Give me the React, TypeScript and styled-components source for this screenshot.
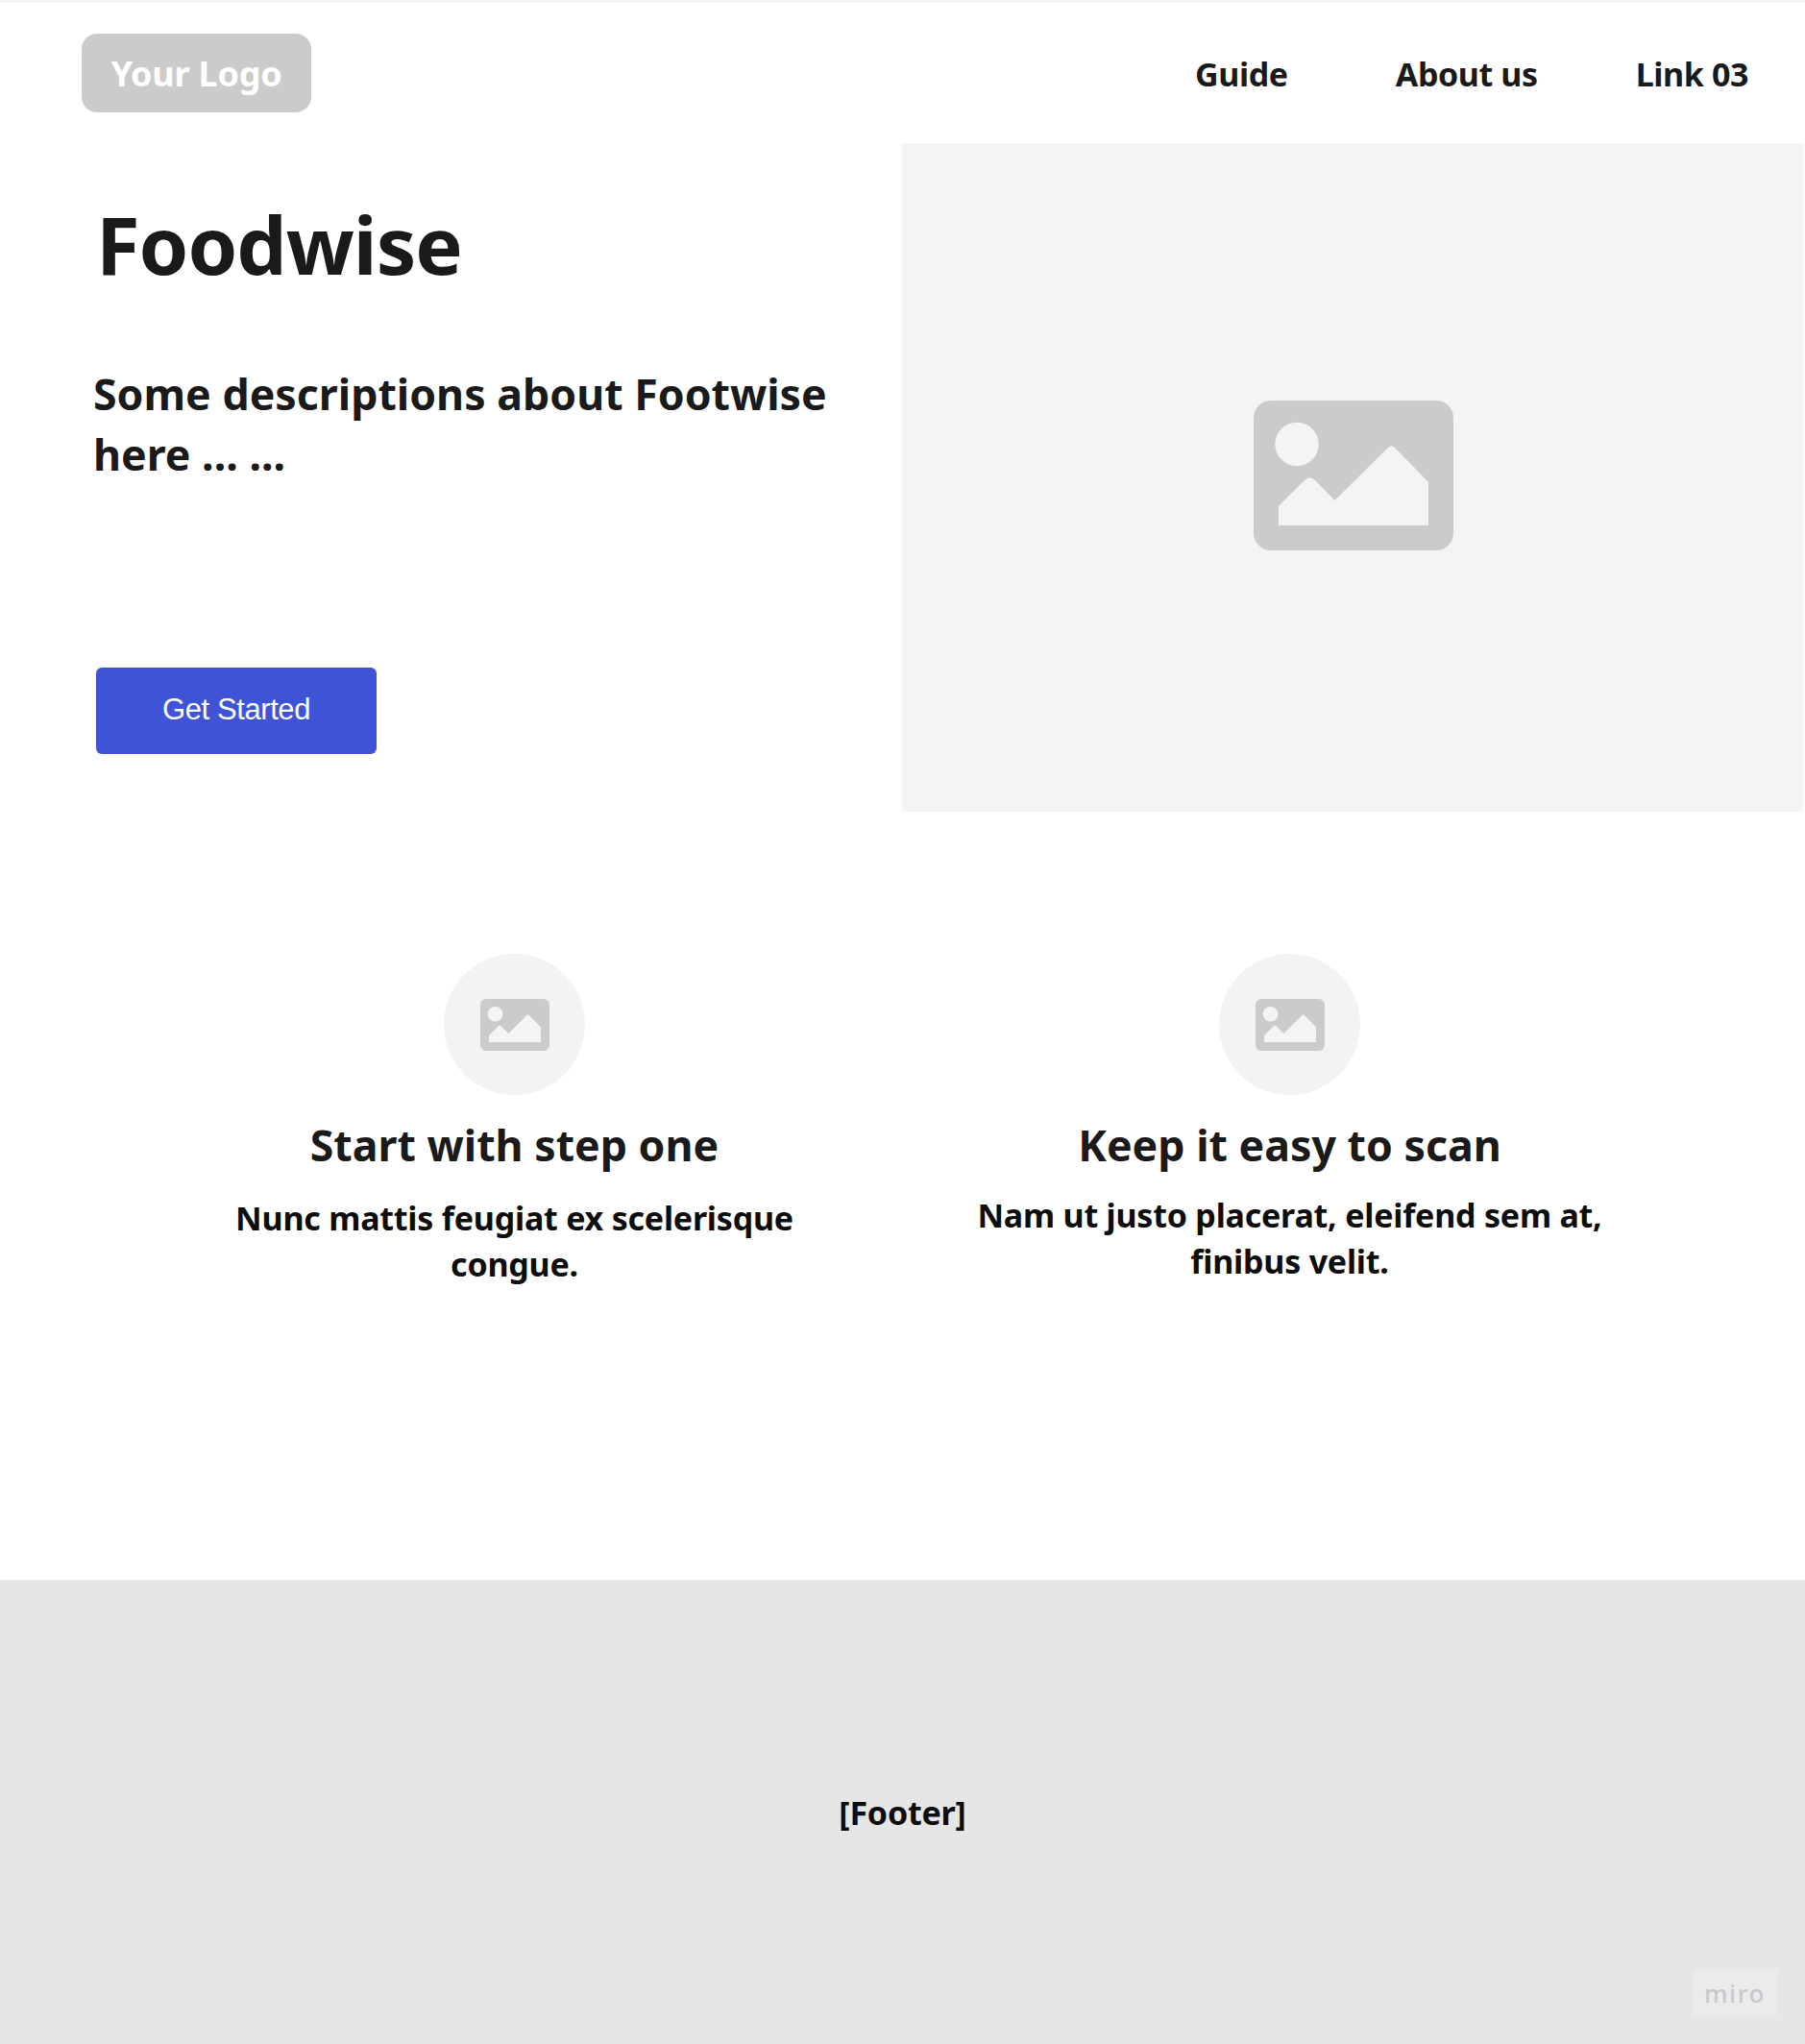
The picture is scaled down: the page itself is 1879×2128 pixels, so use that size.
import { createGlobalStyle } from "styled-components";
import styled from "styled-components";

const GlobalStyle = createGlobalStyle`
  html, body {
    margin: 0;
    padding: 0;
    background: #ffffff;
  }
  * {
    box-sizing: border-box;
  }
`;

const Page = styled.div`
  width: 1879px;
  height: 2128px;
  display: flex;
  flex-direction: column;
  border-top: 3px solid #f3f3f3;
  font-family: "Noto Sans", sans-serif;
  color: #1a1a1a;
`;

const Header = styled.header`
  height: 146px;
  padding: 32px 59px 0 85px;
  display: flex;
  justify-content: space-between;
  align-items: flex-start;
`;

const Logo = styled.div`
  width: 239px;
  height: 82px;
  border-radius: 16px;
  background: #cbcbcb;
  color: #ffffff;
  font-size: 36px;
  font-weight: 700;
  letter-spacing: -0.2px;
  display: flex;
  align-items: center;
  justify-content: center;
`;

const Nav = styled.nav`
  display: flex;
  gap: 102px;
  padding-top: 18px;
`;

const NavLink = styled.a`
  font-size: 34px;
  font-weight: 700;
  line-height: 49px;
  letter-spacing: -0.4px;

  &:first-child {
    margin-right: 10px;
  }
`;

const Hero = styled.section`
  height: 696px;
  display: grid;
  grid-template-columns: 939px 938px;
`;

const HeroText = styled.div`
  padding-left: 97px;
  display: flex;
  flex-direction: column;
  align-items: flex-start;
`;

const Title = styled.h1`
  margin: 48px 0 0 3px;
  font-size: 83px;
  line-height: 113px;
  font-weight: 700;
  letter-spacing: -1px;
`;

const Lead = styled.p`
  margin: 68px 0 0;
  width: 800px;
  font-size: 44.7px;
  line-height: 63px;
  font-weight: 700;
`;

const CtaButton = styled.button`
  margin: 191px 0 0 3px;
  width: 292px;
  height: 90px;
  padding: 0 0 2px;
  border: none;
  border-radius: 6px;
  background: #3f53d7;
  color: #ffffff;
  font-family: "Liberation Sans", Arial, sans-serif;
  font-size: 31px;
  letter-spacing: -0.4px;
`;

const HeroImage = styled.div`
  background: #f4f4f4;
  display: flex;
  align-items: center;
  justify-content: center;
  padding: 0 0 4px 2px;
`;

const Features = styled.section`
  flex: 1;
  padding: 148px 133px 0 132px;
  display: grid;
  grid-template-columns: 807px 807px;
  align-items: start;
`;

const Feature = styled.div`
  display: flex;
  flex-direction: column;
  align-items: center;
  text-align: center;
`;

const IconCircle = styled.div`
  width: 147px;
  height: 147px;
  border-radius: 50%;
  background: #f3f3f3;
  display: flex;
  align-items: center;
  justify-content: center;
`;

const FeatureTitle = styled.h2`
  margin: 22px 0 0;
  font-size: 44.7px;
  line-height: 60px;
  font-weight: 700;
`;

const FeatureBody = styled.p<{ $offset: number }>`
  margin: ${(p) => p.$offset}px 0 0;
  width: 680px;
  color: #0d0d0d;
  font-size: 34px;
  line-height: 48px;
  font-weight: 700;
  letter-spacing: -0.22px;
`;

const Footer = styled.footer`
  position: relative;
  height: 483px;
  background: #e6e6e6;
  color: #0d0d0d;
  font-size: 34px;
  font-weight: 700;
  letter-spacing: -0.2px;
  display: flex;
  align-items: center;
  justify-content: center;
  padding-top: 1px;
`;

const MiroBadge = styled.div`
  position: absolute;
  left: 1762px;
  top: 407px;
  width: 88px;
  height: 47px;
  padding-bottom: 2px;
  background: #ebebeb;
  color: #c8c8cc;
  font-size: 26px;
  font-weight: 500;
  letter-spacing: 1.5px;
  display: flex;
  align-items: center;
  justify-content: center;
`;

const ImageIcon = ({ width }: { width: number }) => (
  <svg width={width} viewBox="0 0 208 156" aria-hidden="true">
    <rect width="208" height="156" rx="18" fill="#cbcbcb" />
    <circle cx="45" cy="45.5" r="22.7" fill="#f4f4f4" />
    <path
      d="M26 130 V110 L53 83 Q58.500 78 64 83 L84.500 104 L140 49 Q143.500 46 147 49 L182 85 V130 Z"
      fill="#f4f4f4"
    />
  </svg>
);

export default function App() {
  return (
    <>
      <GlobalStyle />
      <Page>
        <Header>
          <Logo>Your Logo</Logo>
          <Nav>
            <NavLink>Guide</NavLink>
            <NavLink>About us</NavLink>
            <NavLink>Link 03</NavLink>
          </Nav>
        </Header>
        <Hero>
          <HeroText>
            <Title>Foodwise</Title>
            <Lead>Some descriptions about Footwise here ... ...</Lead>
            <CtaButton>Get Started</CtaButton>
          </HeroText>
          <HeroImage>
            <ImageIcon width={208} />
          </HeroImage>
        </Hero>
        <Features>
          <Feature>
            <IconCircle>
              <ImageIcon width={72} />
            </IconCircle>
            <FeatureTitle>Start with step one</FeatureTitle>
            <FeatureBody $offset={22}>
              Nunc mattis feugiat ex scelerisque congue.
            </FeatureBody>
          </Feature>
          <Feature>
            <IconCircle>
              <ImageIcon width={72} />
            </IconCircle>
            <FeatureTitle>Keep it easy to scan</FeatureTitle>
            <FeatureBody $offset={19}>
              Nam ut justo placerat, eleifend sem at, finibus velit.
            </FeatureBody>
          </Feature>
        </Features>
        <Footer>
          [Footer]
          <MiroBadge>miro</MiroBadge>
        </Footer>
      </Page>
    </>
  );
}
